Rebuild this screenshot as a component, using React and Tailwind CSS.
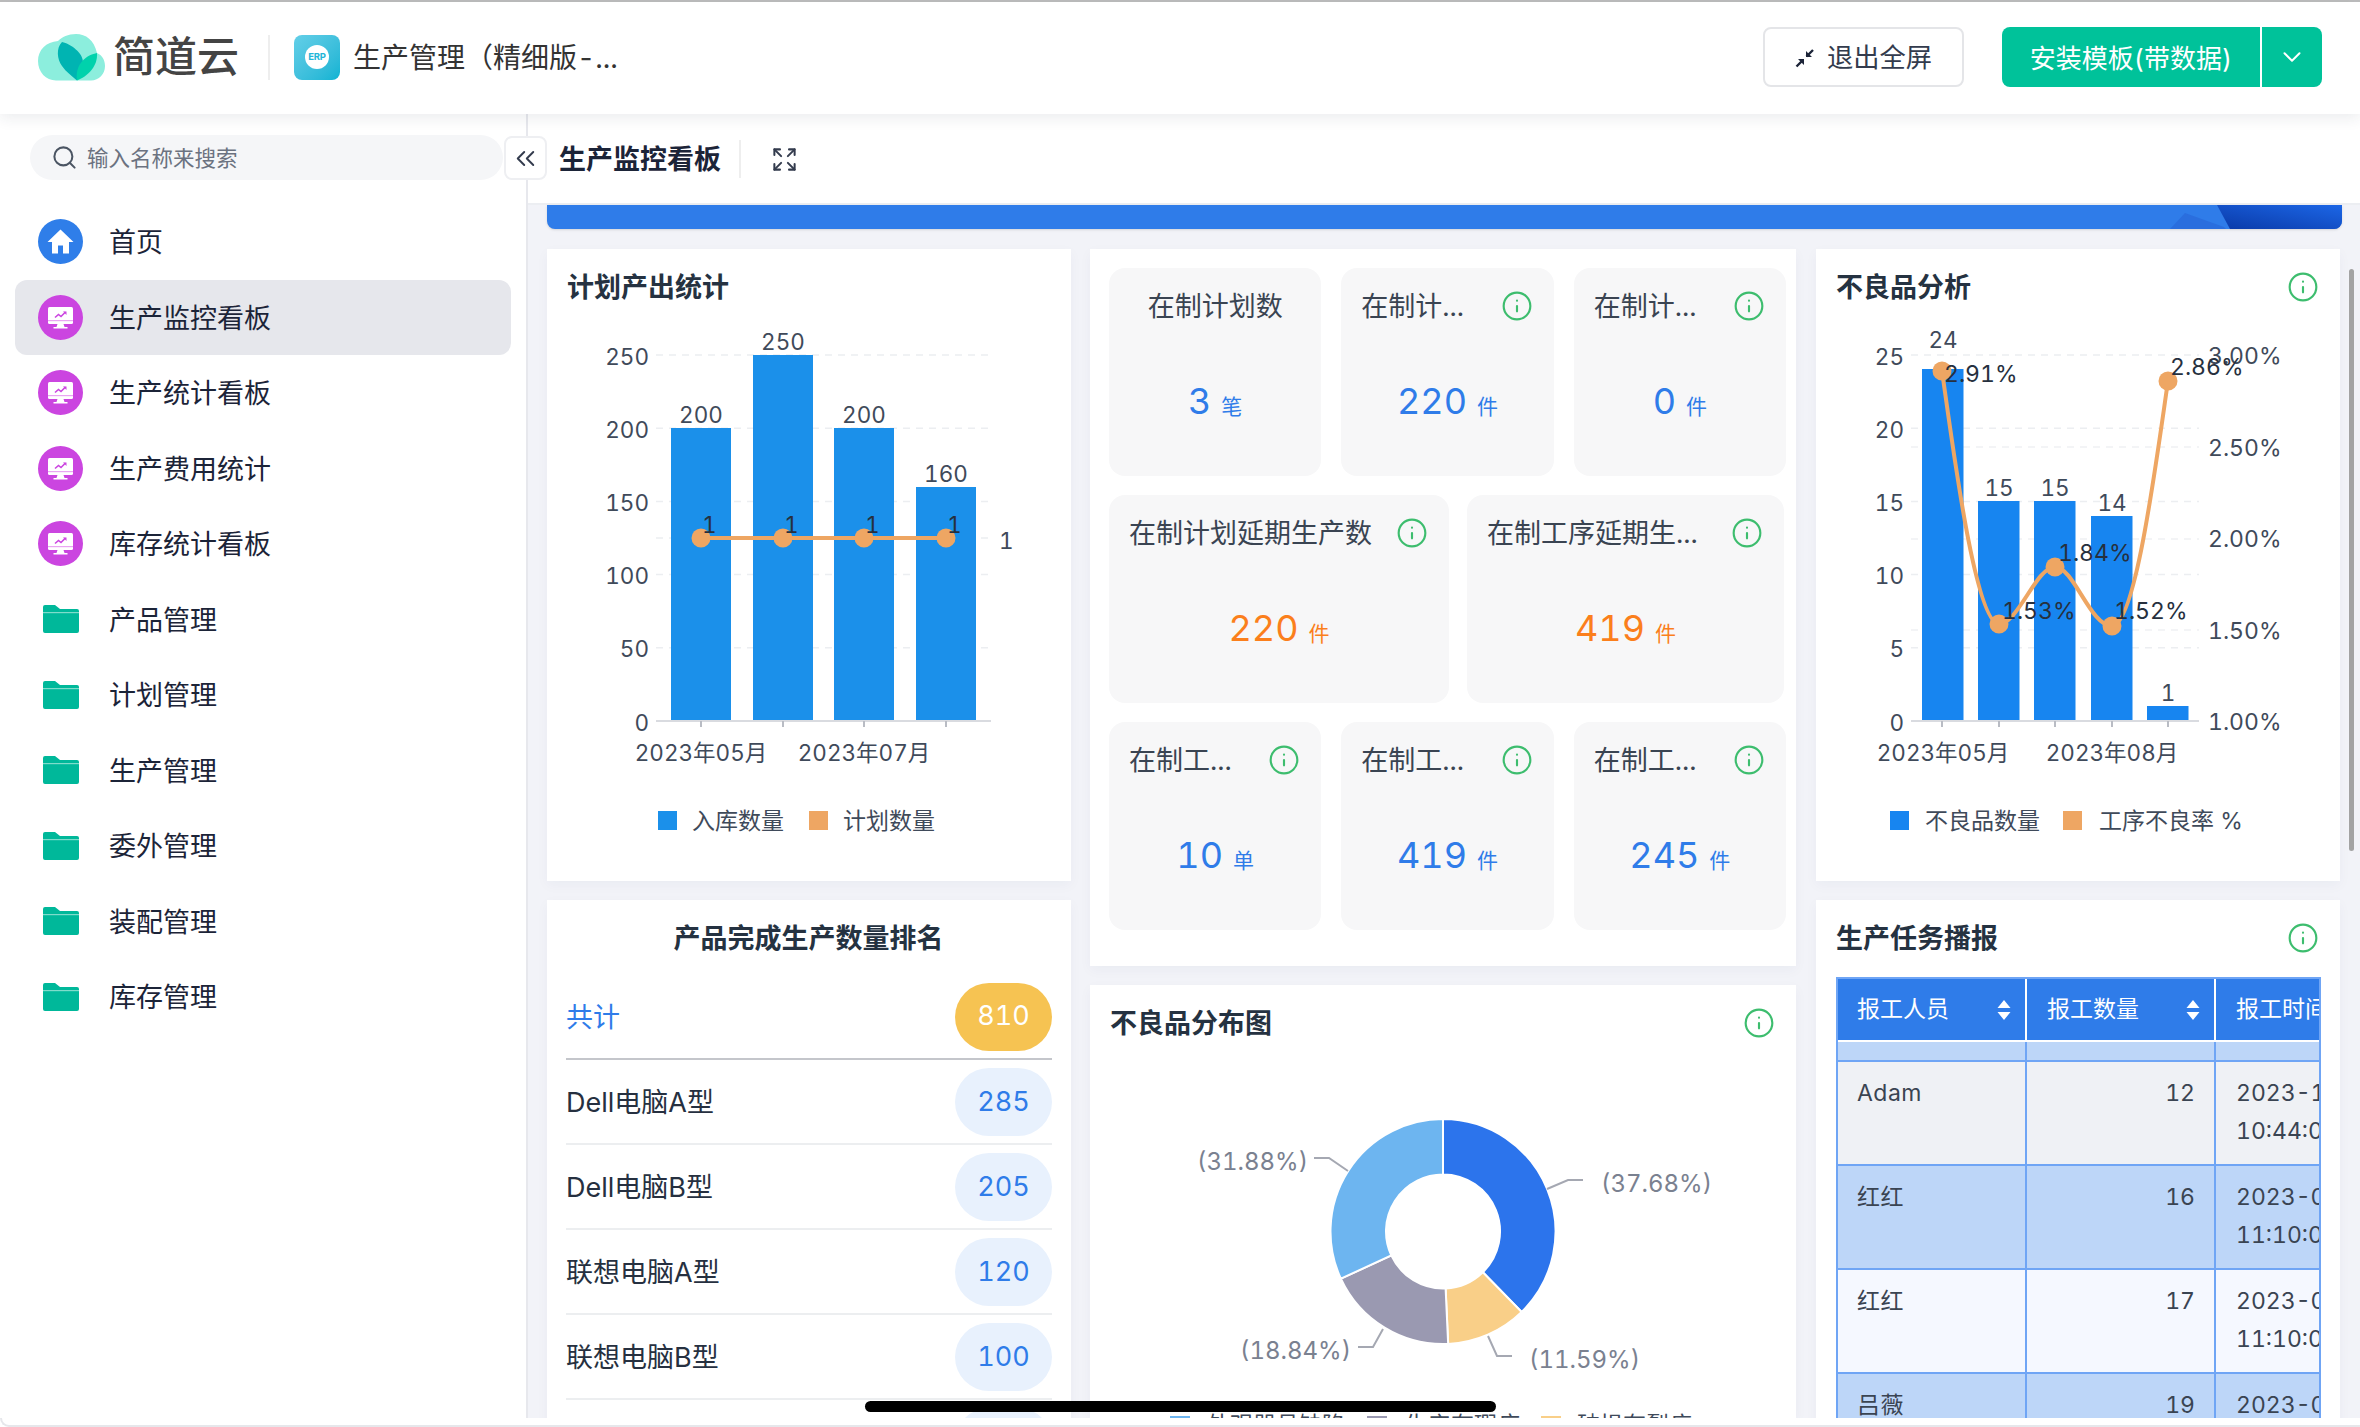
import React from 'react';
import { ChevronDown, ChevronsLeft, Expand, Info, Search } from 'lucide-react';

const menuItems = [
  { name: '首页', type: 'home' },
  { name: '生产监控看板', type: 'board', active: true },
  { name: '生产统计看板', type: 'board' },
  { name: '生产费用统计', type: 'board' },
  { name: '库存统计看板', type: 'board' },
  { name: '产品管理', type: 'folder' },
  { name: '计划管理', type: 'folder' },
  { name: '生产管理', type: 'folder' },
  { name: '委外管理', type: 'folder' },
  { name: '装配管理', type: 'folder' },
  { name: '库存管理', type: 'folder' },
];

const ranking = [
  { name: 'Dell电脑A型', value: 285 },
  { name: 'Dell电脑B型', value: 205 },
  { name: '联想电脑A型', value: 120 },
  { name: '联想电脑B型', value: 100 },
  { name: '惠普电脑A型', value: 100 },
];

const tableRows = [
  { name: 'Adam', qty: 12, date: '2023-10-15', time: '10:44:00', bg: 'bg-[#eff1f5]' },
  { name: '红红', qty: 16, date: '2023-08-21', time: '11:10:00', bg: 'bg-[#bdd6f8]' },
  { name: '红红', qty: 17, date: '2023-08-21', time: '11:10:00', bg: 'bg-[#f5f8ff]' },
  { name: '吕薇', qty: 19, date: '2023-08-21', time: '11:10:00', bg: 'bg-[#bdd6f8]' },
];

const LogoMark = () => (
  <svg width="67" height="47" viewBox="0 0 67 47">
    <path d="M18 46.500C8 46.500 0 38 0 27C0 16 8 8 20 7C24 3 30 0 38 0C48 0 56 6 59 19C64 21 67 26 67 32C67 40 61 46.500 53 46.500Z" fill="#8ceedd" />
    <path d="M24 8C18 14 19 25 24 32C28 38 34 42 39 46.500C41 42 45 36 45 28C45 19 33 10 24 8Z" fill="#00b4b2" />
    <path d="M39 46.500C37 34 44 22 59 19C60 32 50 42 39 46.500Z" fill="#00d2ac" />
  </svg>
);

const ErpIcon = () => (
  <div className="w-[46px] h-[45px] rounded-lg bg-gradient-to-br from-[#62cfe8] to-[#05b3d3] flex items-center justify-center">
    <div className="w-[24px] h-[24px] rounded-full bg-white flex items-center justify-center text-[9.5px] font-bold text-[#22b5d8] tracking-tight">
      ERP
    </div>
  </div>
);

const MenuIcon = ({ type }) => {
  if (type === 'home') {
    return (
      <svg width="45" height="45" viewBox="0 0 45 45">
        <circle cx="22.5" cy="22.5" r="22.5" fill="#2f7ee9" />
        <path d="M22.5 10.5 9.5 23h4.5v11.5h6v-8h5v8h6V23h4.500z" fill="#fff" />
      </svg>
    );
  }
  if (type === 'board') {
    return (
      <svg width="45" height="45" viewBox="0 0 45 45">
        <circle cx="22.5" cy="22.500" r="22.5" fill="#cb45e0" />
        <rect x="10" y="12" width="25" height="17" rx="1.5" fill="#fff" />
        <rect x="10" y="25" width="25" height="1.200" fill="#e9a6f2" />
        <path d="M19.500 29h6l1 3h3v1.500h-14V32h3z" fill="#fff" />
        <path d="M17 22.500l3.500-3 2.500 2 4.500-4.500" stroke="#cb45e0" strokeWidth="1.600" fill="none" />
        <path d="M25 16.500h3.500V20z" fill="#cb45e0" />
      </svg>
    );
  }
  return (
    <svg width="36" height="28" viewBox="0 0 36 28">
      <path d="M0 2a2 2 0 0 1 2-2h10l5 4h17a2 2 0 0 1 2 2v20a2 2 0 0 1-2 2H2a2 2 0 0 1-2-2z" fill="#00b89a" />
      <rect x="0" y="7" width="36" height="1.200" fill="#7fdccb" />
    </svg>
  );
};

const InfoIcon = () => <Info size={32} strokeWidth={1.6} className="text-[#3dbd6e]" />;

const Card = ({ title, info, center, className, children }) => (
  <div className={`bg-white overflow-hidden shadow-[0_4px_12px_rgba(30,40,90,0.04)] ${className}`}>
    <div className={`h-[38px] mt-[19px] pl-5 pr-[21px] flex items-center ${center ? 'justify-center' : 'justify-between'}`}>
      <span className="pt-[3px] text-[27px] font-bold text-[#253241]">{title}</span>
      {info && <InfoIcon />}
    </div>
    {children}
  </div>
);

const StatTile = ({ title, value, unit, orange, info = true, className }) => (
  <div className={`h-[208px] rounded-2xl bg-[#f7f7f8] ${className}`}>
    <div className={`h-9 mt-5 pl-5 flex items-center ${info ? 'justify-between pr-[21px]' : 'justify-center pr-5'}`}>
      <span className="pt-[2px] text-[27px] text-[#3a4452] whitespace-nowrap">{title}</span>
      {info && <InfoIcon />}
    </div>
    <div className={`mt-[55px] h-11 flex items-baseline justify-center gap-[10px] ${orange ? 'text-[#fb7f1c]' : 'text-[#2f7ce9]'}`}>
      <span className="text-[36px] leading-[44px]">{value}</span>
      <span className="text-[21px]">{unit}</span>
    </div>
  </div>
);

const axisText = '#3f4a5a';

const PlanChart = () => {
  const bars = [
    { x: 671, y: 428, v: 200 },
    { x: 753, y: 355, v: 250 },
    { x: 834, y: 428, v: 200 },
    { x: 916, y: 487, v: 160 },
  ];
  const ticks = [250, 200, 150, 100, 50, 0];
  const points = [701, 783, 864, 946];
  return (
    <svg width="524" height="575" viewBox="547 306 524 575" className="block">
      {ticks.slice(0, 5).map((t, i) => (
        <line key={t} x1="656" x2="991" y1={355 + i * 73.2} y2={355 + i * 73.2} stroke="#eceef1" strokeWidth="1.500" strokeDasharray="7 6" />
      ))}
      <line x1="656" x2="991" y1="538" y2="538" stroke="#eceef1" strokeWidth="1.500" strokeDasharray="7 6" />
      {ticks.map((t, i) => (
        <text key={t} x="649" y={364.5 + i * 73.2} textAnchor="end" fontSize="22.500" fill={axisText}>{t}</text>
      ))}
      {bars.map((b) => (
        <g key={b.x}>
          <rect x={b.x} y={b.y} width="60" height={721 - b.y} fill="#1b90ea" />
          <text x={b.x + 30} y={b.y - 5} textAnchor="middle" fontSize="22.500" fill={axisText}>{b.v}</text>
        </g>
      ))}
      <line x1="656" x2="991" y1="721" y2="721" stroke="#d9dbe0" strokeWidth="2" />
      {points.map((x) => (
        <line key={x} x1={x} x2={x} y1="721" y2="727" stroke="#b9bcc4" strokeWidth="2" />
      ))}
      <line x1="701" x2="946" y1="538" y2="538" stroke="#eea663" strokeWidth="4" />
      {points.map((x) => (
        <g key={x}>
          <circle cx={x} cy="538" r="9.500" fill="#eea663" />
          <text x={x + 1} y="533" fontSize="22.500" fill="#26303e">1</text>
        </g>
      ))}
      <text x="999" y="549" fontSize="22.500" fill={axisText}>1</text>
      <text x="701" y="761" textAnchor="middle" fontSize="22.500" fill={axisText}>2023年05月</text>
      <text x="864" y="761" textAnchor="middle" fontSize="22.500" fill={axisText}>2023年07月</text>
      <rect x="658" y="811" width="19" height="19" fill="#1b90ea" />
      <text x="692" y="829" fontSize="23" fill={axisText}>入库数量</text>
      <rect x="809" y="811" width="19" height="19" fill="#eea663" />
      <text x="843" y="829" fontSize="23" fill={axisText}>计划数量</text>
    </svg>
  );
};

const DefectChart = () => {
  const bars = [
    { x: 1922, y: 369, v: 24 },
    { x: 1978, y: 501, v: 15 },
    { x: 2034, y: 501, v: 15 },
    { x: 2091, y: 516, v: 14 },
    { x: 2147, y: 706, v: 1 },
  ];
  const points = [
    { x: 1942, y: 371, label: '2.91%', lx: 1944, ly: 382 },
    { x: 1999, y: 624, label: '1.53%', lx: 2002, ly: 619 },
    { x: 2055, y: 567, label: '1.84%', lx: 2058, ly: 561 },
    { x: 2112, y: 626, label: '1.52%', lx: 2114, ly: 619 },
    { x: 2168, y: 381, label: '2.86%', lx: 2170, ly: 375 },
  ];
  const left = [25, 20, 15, 10, 5, 0];
  const right = [
    { t: '3.00%', y: 356 },
    { t: '2.50%', y: 448 },
    { t: '2.00%', y: 539 },
    { t: '1.50%', y: 631 },
    { t: '1.00%', y: 722 },
  ];
  return (
    <svg width="524" height="575" viewBox="1816 306 524 575" className="block">
      {left.slice(0, 5).map((t, i) => (
        <line key={t} x1="1911" x2="2199" y1={355 + i * 73.2} y2={355 + i * 73.2} stroke="#eceef1" strokeWidth="1.500" strokeDasharray="7 6" />
      ))}
      {[447, 539, 630].map((y) => (
        <line key={y} x1="1911" x2="2199" y1={y} y2={y} stroke="#f0f1f4" strokeWidth="1.500" strokeDasharray="7 6" />
      ))}
      {left.map((t, i) => (
        <text key={t} x="1904" y={364.5 + i * 73.2} textAnchor="end" fontSize="22.500" fill={axisText}>{t}</text>
      ))}
      {right.map((r) => (
        <text key={r.t} x="2208" y={r.y + 8} fontSize="23" fill={axisText}>{r.t}</text>
      ))}
      {bars.map((b) => (
        <g key={b.x}>
          <rect x={b.x} y={b.y} width="41.500" height={721 - b.y} fill="#1785f0" />
          <text x={b.x + 21} y={b.y - (b.v === 24 ? 21 : 5)} textAnchor="middle" fontSize="22.500" fill={axisText}>{b.v}</text>
        </g>
      ))}
      <line x1="1911" x2="2199" y1="721" y2="721" stroke="#d9dbe0" strokeWidth="2" />
      {[1942, 1999, 2055, 2112, 2168].map((x) => (
        <line key={x} x1={x} x2={x} y1="721" y2="727" stroke="#b9bcc4" strokeWidth="2" />
      ))}
      <path
        d="M1942 371C1952 440 1975 624 1999 624C2018 624 2036 567 2055 567C2074 567 2090 626 2112 626C2135 626 2155 470 2168 381"
        fill="none"
        stroke="#eea663"
        strokeWidth="4"
      />
      {points.map((p) => (
        <g key={p.x}>
          <circle cx={p.x} cy={p.y} r="9.500" fill="#eea663" />
          <text x={p.lx} y={p.ly} fontSize="23" fill="#26303e">{p.label}</text>
        </g>
      ))}
      <text x="1943" y="761" textAnchor="middle" fontSize="22.500" fill={axisText}>2023年05月</text>
      <text x="2112" y="761" textAnchor="middle" fontSize="22.500" fill={axisText}>2023年08月</text>
      <rect x="1890" y="811" width="19" height="19" fill="#1785f0" />
      <text x="1925" y="829" fontSize="23" fill={axisText}>不良品数量</text>
      <rect x="2063" y="811" width="19" height="19" fill="#eea663" />
      <text x="2099" y="829" fontSize="23" fill={axisText}>工序不良率 %</text>
    </svg>
  );
};

// donut slice between two fractions of the turn, clockwise from 12 o'clock
const slicePath = (cx, cy, R, r, from, to) => {
  const pt = (rad, f) => {
    const a = f * 2 * Math.PI - Math.PI / 2;
    return `${cx + rad * Math.cos(a)} ${cy + rad * Math.sin(a)}`;
  };
  const large = to - from > 0.5 ? 1 : 0;
  return `M${pt(R, from)}A${R} ${R} 0 ${large} 1 ${pt(R, to)}L${pt(r, to)}A${r} ${r} 0 ${large} 0 ${pt(r, from)}Z`;
};

const DonutChart = () => {
  const slices = [
    { share: 0.3768, color: '#2c74ec' },
    { share: 0.1159, color: '#f9cf88' },
    { share: 0.1884, color: '#9a99b1' },
    { share: 0.3189, color: '#6db5f0' },
  ];
  let acc = 0;
  const labels = [
    { t: '(37.68%)', x: 1601, y: 1192, d: 'M1547 1189L1568 1180H1583' },
    { t: '(31.88%)', x: 1197, y: 1170, d: 'M1348 1171L1329 1158H1314' },
    { t: '(18.84%)', x: 1240, y: 1359, d: 'M1383 1329L1373 1347H1358' },
    { t: '(11.59%)', x: 1529, y: 1368, d: 'M1488 1336L1497 1356H1512' },
  ];
  const legend = [
    { t: '外观器具缺陷', c: '#6db5f0', x: 1170, tx: 1207 },
    { t: '生产有瑕疵', c: '#9a99b1', x: 1367, tx: 1405 },
    { t: '破损有裂痕', c: '#f9cf88', x: 1541, tx: 1577 },
  ];
  return (
    <svg width="706" height="376" viewBox="1090 1042 706 376" className="block">
      {slices.map((s) => {
        const d = slicePath(1443, 1231.500, 112.500, 57, acc, acc + s.share);
        acc += s.share;
        return <path key={s.color} d={d} fill={s.color} stroke="#fff" strokeWidth="2" />;
      })}
      {labels.map((l) => (
        <g key={l.t}>
          <path d={l.d} fill="none" stroke="#a5a8b2" strokeWidth="2" />
          <text x={l.x} y={l.y} fontSize="24" fill="#7a8190">{l.t}</text>
        </g>
      ))}
      {legend.map((l) => (
        <g key={l.t}>
          <rect x={l.x} y="1416" width="20" height="19" fill={l.c} />
          <text x={l.tx} y="1433" fontSize="23" fill={axisText}>{l.t}</text>
        </g>
      ))}
    </svg>
  );
};

const SortIcon = () => (
  <svg width="14" height="20" viewBox="0 0 14 20" className="shrink-0">
    <path d="M7 0l6.500 8H.5zM7 20L.5 12h13z" fill="#fff" />
  </svg>
);

const TaskTable = () => (
  <div className="mt-5 ml-5 w-[485px] h-[442px] overflow-hidden border-x-2 border-[#6fa5f5]">
    <div className="grid grid-cols-[189px_189px_180px] h-[63px] bg-[#2f7ce9] border-t-2 border-[#6fa5f5] text-white text-[23px]">
      <div className="flex items-center justify-between pl-[19px] pr-[14px] border-r-2 border-white">
        <span>报工人员</span>
        <SortIcon />
      </div>
      <div className="flex items-center justify-between pl-5 pr-[14px] border-r-2 border-white">
        <span>报工数量</span>
        <SortIcon />
      </div>
      <div className="flex items-center pl-5 whitespace-nowrap">报工时间</div>
    </div>
    <div className="grid grid-cols-[189px_189px_180px] h-[22px] bg-[#bdd6f8] border-t-2 border-white border-b-2 border-b-[#6fa5f5]">
      <div className="border-r-2 border-[#6fa5f5]" />
      <div className="border-r-2 border-[#6fa5f5]" />
      <div />
    </div>
    {tableRows.map((row, i) => (
      <div key={i} className={`grid grid-cols-[189px_189px_180px] h-[104px] border-b-2 border-[#6fa5f5] text-[23px] leading-[38px] text-[#3a4452] ${row.bg}`}>
        <div className="pl-[19px] pt-3 tracking-[0.5px] border-r-2 border-[#6fa5f5]">{row.name}</div>
        <div className="pr-[19px] pt-3 text-right border-r-2 border-[#6fa5f5]">{row.qty}</div>
        <div className="pl-5 pt-3 whitespace-nowrap">
          <div>{row.date}</div>
          <div>{row.time}</div>
        </div>
      </div>
    ))}
  </div>
);

const App = () => {
  return (
    <div className="relative w-[2360px] h-[1427px] overflow-hidden flex flex-col bg-white tabular-nums font-[Inter,'Noto_Sans_CJK_SC',sans-serif]">
      <div className="h-[2px] bg-[#bdbdbd]" />
      <header className="relative z-10 h-[112px] bg-white flex items-center justify-between shadow-[0_4px_14px_rgba(30,40,70,0.09)] pl-[38px] pr-[38px]">
        <div className="flex items-center -mt-[2px]">
          <LogoMark />
          <span className="ml-2 w-[125px] text-[42px] leading-none font-medium text-[#444] whitespace-nowrap">简道云</span>
          <div className="ml-[30px] w-[2px] h-[45px] bg-[#eeeeee]" />
          <div className="ml-6"><ErpIcon /></div>
          <span className="ml-[13px] pt-[2px] text-[28px] text-[#333] whitespace-nowrap">生产管理（精细版-...</span>
        </div>
        <div className="flex items-center -mt-[2px]">
          <button className="w-[201px] h-[60px] pt-[2px] rounded-lg border-2 border-[#e4e5e8] bg-white flex items-center justify-center gap-3 text-[26.300px] text-[#333b4d]">
            <svg width="20" height="20" viewBox="0 0 20 20">
              <path d="M18 2l-6.500 6.500M1.500 18.500L8 12" stroke="#1c2438" strokeWidth="2.400" />
              <path d="M11 3v6h6zM9 17v-6H3z" fill="#1c2438" />
            </svg>
            退出全屏
          </button>
          <div className="ml-[38px] h-[60px] flex rounded-lg overflow-hidden bg-[#00c29a] text-white">
            <div className="w-[260px] pt-[2px] flex items-center justify-center text-[26px] border-r-2 border-white">安装模板(带数据)</div>
            <div className="w-[60px] flex items-center justify-center">
              <ChevronDown size={30} strokeWidth={1.6} />
            </div>
          </div>
        </div>
      </header>

      <div className="flex h-[1304px]">
        <aside className="relative w-[528px] shrink-0 bg-white border-r-2 border-[#e7e8ed] px-[15px]">
          <div className="mt-[21px] ml-[15px] w-[473px] h-[45px] rounded-full bg-[#f5f6f8] flex items-center pl-[21px] gap-[9px] text-[21.500px] text-[#6b7280]">
            <Search size={27} strokeWidth={1.800} className="text-[#4b5563]" />
            <span className="pt-[2px]">输入名称来搜索</span>
          </div>
          <nav className="mt-6">
            {menuItems.map((item) => (
              <div
                key={item.name}
                className={`h-[75.5px] flex items-center pl-[23px] gap-[26px] rounded-xl text-[27px] text-[#1c2438] ${item.active ? 'bg-[#e6e7ec]' : ''}`}
              >
                <div className="w-[45px] flex justify-center">
                  <MenuIcon type={item.type} />
                </div>
                <span className="pt-[3px]">{item.name}</span>
              </div>
            ))}
          </nav>
          <button className="absolute top-[22px] left-[504px] z-10 w-[43px] h-[44px] rounded-lg border-2 border-[#eeeff2] bg-white flex items-center justify-center text-[#333b4d]">
            <ChevronsLeft size={31} strokeWidth={1.500} />
          </button>
        </aside>

        <main className="flex-1 bg-[#f2f3f8] overflow-hidden">
          <div className="h-[91px] bg-white border-b-2 border-[#eceef2] flex items-center pl-[31px]">
            <span className="pt-[3px] text-[27px] font-bold text-[#1c2438] whitespace-nowrap">生产监控看板</span>
            <div className="ml-[18px] w-[2px] h-[38px] bg-[#eeeeee]" />
            <Expand size={27} strokeWidth={1.800} className="ml-[30px] mt-[2px] text-[#333b4d]" />
          </div>

          <div className="ml-[19px] w-[1795px] h-[24px] bg-[#2f7ce9] rounded-b-lg relative overflow-hidden shadow-sm">
            <svg width="172" height="24" viewBox="0 0 172 24" className="absolute right-0 top-0">
              <defs>
                <linearGradient id="bannerShade" x1="0" y1="1" x2="1" y2="0">
                  <stop offset="0" stopColor="#0a3aa8" />
                  <stop offset="1" stopColor="#1c66e6" />
                </linearGradient>
              </defs>
              <path d="M0 24L15 8l39 14 2 2z" fill="#2a6ede" />
              <path d="M47 0h125v24H60z" fill="url(#bannerShade)" />
            </svg>
          </div>

          <div className="ml-[19px] mt-5 flex">
            <div className="w-[524px] flex flex-col gap-[19px]">
              <Card title="计划产出统计" className="h-[632px]">
                <PlanChart />
              </Card>
              <Card title="产品完成生产数量排名" center className="h-[600px]">
                <div className="mt-[18px] px-[19px]">
                  <div className="h-[85px] flex items-center justify-between border-b-2 border-[#c4c6cb] text-[27px] text-[#2f7ce9]">
                    <span className="pt-[4px]">共计</span>
                    <span className="w-[97px] h-[68px] rounded-full bg-[#f6c352] text-white flex items-center justify-center">810</span>
                  </div>
                  {ranking.map((r) => (
                    <div key={r.name} className="h-[85px] flex items-center justify-between border-b-2 border-[#eceef0] text-[27px] text-[#263040]">
                      <span className="pt-[4px]">{r.name}</span>
                      <span className="w-[97px] h-[68px] pt-[2px] rounded-full bg-[#e8f1fd] text-[#2f7ce9] flex items-center justify-center">{r.value}</span>
                    </div>
                  ))}
                </div>
              </Card>
            </div>

            <div className="ml-[19px] w-[706px] flex flex-col gap-[19px]">
              <div className="h-[717px] bg-white pt-[19px] pl-[19px] pr-[10px] flex flex-col gap-[19px] shadow-[0_4px_12px_rgba(30,40,90,0.04)]">
                <div className="grid grid-cols-3 gap-x-5">
                  <StatTile title="在制计划数" value="3" unit="笔" info={false} />
                  <StatTile title="在制计..." value="220" unit="件" />
                  <StatTile title="在制计..." value="0" unit="件" />
                </div>
                <div className="flex gap-[18px]">
                  <StatTile title="在制计划延期生产数" value="220" unit="件" orange className="w-[340px]" />
                  <StatTile title="在制工序延期生..." value="419" unit="件" orange className="w-[317px]" />
                </div>
                <div className="grid grid-cols-3 gap-x-5">
                  <StatTile title="在制工..." value="10" unit="单" />
                  <StatTile title="在制工..." value="419" unit="件" />
                  <StatTile title="在制工..." value="245" unit="件" />
                </div>
              </div>
              <Card title="不良品分布图" info className="h-[433px]">
                <DonutChart />
              </Card>
            </div>

            <div className="ml-5 w-[524px] flex flex-col gap-[19px]">
              <Card title="不良品分析" info className="h-[632px]">
                <DefectChart />
              </Card>
              <Card title="生产任务播报" info className="h-[600px]">
                <TaskTable />
              </Card>
            </div>
          </div>
        </main>
      </div>
      <div className="h-[9px] bg-white border-b-2 border-l-2 rounded-bl-[9px] border-[#e6e7eb]" />

      <div className="absolute left-[2349px] top-[269px] w-[5px] h-[582px] rounded-full bg-[#a3a3a3]" />
      <div className="absolute left-[865px] top-[1401px] w-[631px] h-[11px] rounded-full bg-black" />
    </div>
  );
};

export default App;
